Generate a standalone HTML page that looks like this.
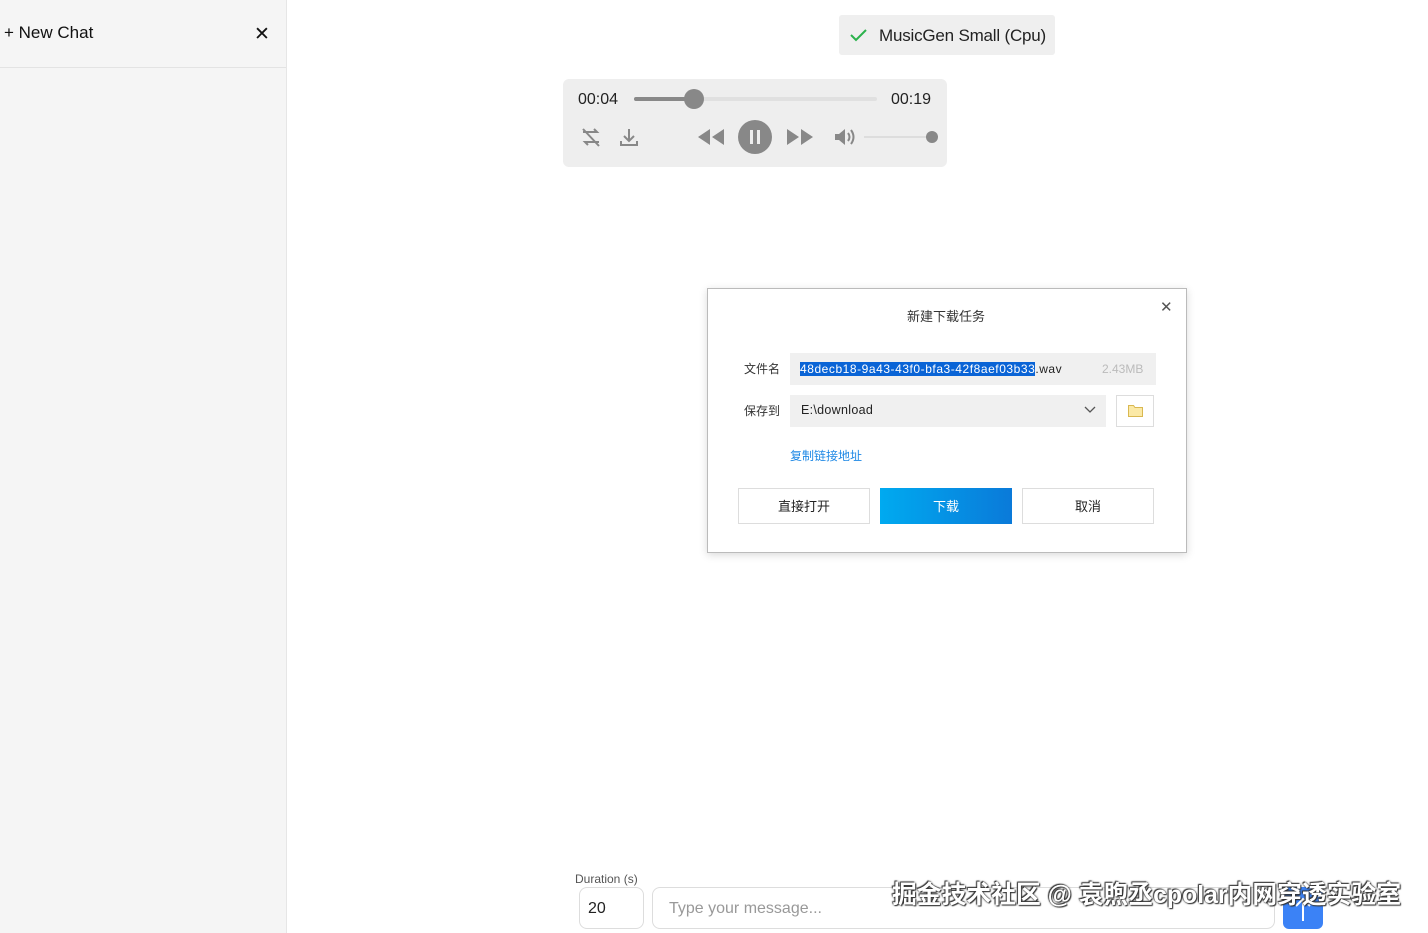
<!DOCTYPE html>
<html><head><meta charset="utf-8"><style>
*{box-sizing:border-box;margin:0;padding:0}
body{width:1428px;height:933px;position:relative;background:#fff;font-family:"Liberation Sans","Noto Sans CJK SC",sans-serif;overflow:hidden;color:#222}
.abs{position:absolute}
.cn{font-family:"Liberation Sans","Noto Sans CJK SC",sans-serif}
</style></head><body>
<div class="abs" style="left:0;top:0;width:287px;height:933px;background:#f5f5f5;border-right:1px solid #e6e6e6"></div>
<div class="abs" style="left:0;top:67px;width:286px;height:1px;background:#e3e3e3"></div>
<div class="abs" style="left:4px;top:23px;font-size:17px;color:#111">+ New Chat</div>
<div class="abs" style="left:254px;top:23px;font-size:19px;color:#111">✕</div>

<div class="abs" style="left:839px;top:15px;width:216px;height:40px;background:#efefef;border-radius:3px"></div>
<svg class="abs" style="left:849px;top:27px" width="20" height="16"><path d="M2 8 L7 13 L17 3" stroke="#2bb24c" stroke-width="2" fill="none"/></svg>
<div class="abs" style="left:879px;top:26px;font-size:17px;color:#222;letter-spacing:-0.2px">MusicGen Small (Cpu)</div>

<div class="abs" style="left:563px;top:79px;width:384px;height:88px;background:#eeeeee;border-radius:6px"></div>
<div class="abs" style="left:578px;top:91px;font-size:16px">00:04</div>
<div class="abs" style="left:891px;top:91px;font-size:16px">00:19</div>
<div class="abs" style="left:634px;top:97px;width:243px;height:4px;background:#e0e0e0;border-radius:2px"></div>
<div class="abs" style="left:634px;top:97px;width:60px;height:4px;background:#888;border-radius:2px"></div>
<div class="abs" style="left:684px;top:89px;width:20px;height:20px;background:#888;border-radius:50%"></div>
<svg class="abs" style="left:580px;top:126px" width="22" height="22" stroke="#888" stroke-width="2" fill="none"><path d="M3 6h14l-3-3M19 16H5l3 3M3 3l16 17"/></svg>
<svg class="abs" style="left:619px;top:127px" width="20" height="20" stroke="#888" stroke-width="2" fill="none"><path d="M10 2v11M5 9l5 5 5-5M2 14v4h16v-4"/></svg>
<svg class="abs" style="left:697px;top:128px" width="28" height="18" fill="#888"><path d="M13 1v16L1 9zM27 1v16L15 9z"/></svg>
<div class="abs" style="left:738px;top:120px;width:34px;height:34px;background:#888;border-radius:50%"></div>
<div class="abs" style="left:750px;top:130px;width:3px;height:14px;background:#eee"></div>
<div class="abs" style="left:757px;top:130px;width:3px;height:14px;background:#eee"></div>
<svg class="abs" style="left:786px;top:128px" width="28" height="18" fill="#888"><path d="M1 1v16l12-8zM15 1v16l12-8z"/></svg>
<svg class="abs" style="left:834px;top:127px" width="22" height="20" fill="#888"><path d="M1 7h4l6-5v16l-6-5H1z"/><path d="M14 6q3 4 0 8M17 3q5 7 0 14" stroke="#888" stroke-width="2" fill="none"/></svg>
<div class="abs" style="left:864px;top:136px;width:68px;height:2px;background:#ddd"></div>
<div class="abs" style="left:926px;top:131px;width:12px;height:12px;background:#888;border-radius:50%"></div>

<div class="abs" style="left:707px;top:288px;width:480px;height:265px;background:#fff;border:1px solid #bbb;box-shadow:0 2px 8px rgba(0,0,0,.15)"></div>
<div class="abs cn" style="left:907px;top:306px;font-size:13px;color:#333">新建下载任务</div>
<div class="abs" style="left:1160px;top:298px;font-size:15px;color:#555">✕</div>
<div class="abs cn" style="left:744px;top:360px;font-size:12px;color:#333">文件名</div>
<div class="abs" style="left:790px;top:353px;width:366px;height:32px;background:#f0f0f0"></div>
<div class="abs" style="left:800px;top:362px;font-size:12px;color:#222;letter-spacing:0.55px"><span style="background:#0a64d6;color:#fff">48decb18-9a43-43f0-bfa3-42f8aef03b33</span>.wav</div>
<div class="abs" style="left:1102px;top:362px;font-size:12px;color:#bbb">2.43MB</div>
<div class="abs cn" style="left:744px;top:402px;font-size:12px;color:#333">保存到</div>
<div class="abs" style="left:790px;top:395px;width:316px;height:32px;background:#f0f0f0"></div>
<div class="abs" style="left:801px;top:403px;font-size:12.5px;color:#222;letter-spacing:0.3px">E:\download</div>
<svg class="abs" style="left:1084px;top:406px" width="12" height="8"><path d="M1 1l5 5 5-5" stroke="#555" fill="none" stroke-width="1.3"/></svg>
<div class="abs" style="left:1116px;top:395px;width:38px;height:32px;border:1px solid #ddd;background:#fff"></div>
<svg class="abs" style="left:1128px;top:404px" width="15" height="13"><path d="M0.5 1.5h5l1.5 2h7.5v9h-14z" fill="#fbe9a6" stroke="#d9b851"/></svg>
<div class="abs cn" style="left:790px;top:447px;font-size:12px;color:#1e88e5">复制链接地址</div>
<div class="abs cn" style="left:738px;top:488px;width:132px;height:36px;border:1px solid #ddd;text-align:center;line-height:36px;font-size:13px;color:#222">直接打开</div>
<div class="abs cn" style="left:880px;top:488px;width:132px;height:36px;background:linear-gradient(90deg,#00aaf0,#0a7ad9);text-align:center;line-height:38px;font-size:13px;color:#fff">下载</div>
<div class="abs cn" style="left:1022px;top:488px;width:132px;height:36px;border:1px solid #ddd;text-align:center;line-height:36px;font-size:13px;color:#222">取消</div>

<div class="abs" style="left:575px;top:872px;font-size:12px;color:#555">Duration (s)</div>
<div class="abs" style="left:579px;top:887px;width:65px;height:42px;border:1px solid #ddd;border-radius:8px;padding:12px 8px;font-size:16px">20</div>
<div class="abs" style="left:652px;top:887px;width:623px;height:42px;border:1px solid #ddd;border-radius:8px;padding:12px 16px;font-size:16px;color:#999">Type your message...</div>
<div class="abs" style="left:1283px;top:887px;width:40px;height:42px;background:#3b82f6;border-radius:6px"></div>
<svg class="abs" style="left:1293px;top:895px" width="20" height="28"><path d="M10 26V4M3 11l7-7 7 7" stroke="#fff" stroke-width="2" fill="none"/></svg>
<div class="abs cn" style="left:892px;top:875px;font-size:24.8px;color:#fff;font-weight:bold;text-shadow:0 0 2px #333,1px 1px 1px #333,-1px -1px 1px #333">掘金技术社区 @ 袁煦丞cpolar内网穿透实验室</div>
</body></html>
